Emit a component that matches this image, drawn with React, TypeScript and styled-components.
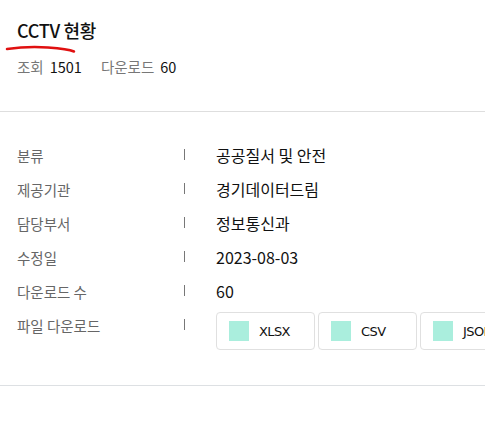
import styled, { createGlobalStyle } from "styled-components";

const GlobalStyle = createGlobalStyle`
  html, body {
    margin: 0;
    padding: 0;
    background: #fff;
  }
  body {
    font-family: "Noto Sans CJK KR", "Noto Sans", sans-serif;
    color: #111;
    overflow: hidden;
  }
`;

const Page = styled.div`
  width: 485px;
  overflow: hidden;
`;

const Header = styled.header`
  position: relative;
  padding: 17px 17px 0;
  height: 94px;
  border-bottom: 1px solid #dedede;
`;

const Title = styled.h1`
  margin: 0;
  font-size: 18px;
  font-weight: 500;
  line-height: 26px;
  letter-spacing: -0.3px;
  color: #111;
`;

const Scribble = styled.svg`
  position: absolute;
  left: 0;
  top: 40px;
  pointer-events: none;
`;

const Stats = styled.div`
  display: flex;
  gap: 19px;
  margin-top: 14px;
  font-size: 14.5px;
  line-height: 20px;
`;

const Stat = styled.span`
  display: flex;
  gap: 6px;
  color: #777;

  b {
    font-weight: 400;
    color: #111;
  }
`;

const InfoList = styled.dl`
  margin: 0;
  padding: 26px 0 35px 17px;
  border-bottom: 1px solid #dde0e3;
`;

const Row = styled.div<{ $tall?: boolean }>`
  display: flex;
  align-items: ${(p) => (p.$tall ? "flex-start" : "center")};
  min-height: 34px;
`;

const Label = styled.dt`
  display: flex;
  align-items: center;
  width: 168px;
  height: 34px;
  flex-shrink: 0;
  font-size: 14.5px;
  color: #666;
  position: relative;

  &::after {
    content: "";
    position: absolute;
    right: 0;
    top: 11px;
    width: 1px;
    height: 11px;
    background: #777;
  }
`;

const Value = styled.dd`
  margin: 0 0 0 31px;
  font-size: 16px;
  line-height: 34px;
  color: #111;
`;

const Files = styled.dd`
  margin: 4px 0 0 31px;
  display: flex;
  gap: 3px;
  flex-wrap: nowrap;
`;

const FileButton = styled.button`
  display: flex;
  align-items: center;
  gap: 10px;
  flex-shrink: 0;
  box-sizing: border-box;
  width: 99px;
  height: 38px;
  padding: 0 12px;
  border: 1px solid #e0e0e0;
  border-radius: 4px;
  background: #fff;
  font-family: "DejaVu Sans", "Noto Sans", sans-serif;
  font-size: 13px;
  color: #111;
  letter-spacing: -0.6px;
  cursor: pointer;
`;

const Swatch = styled.span`
  width: 20px;
  height: 20px;
  background: #aaeedd;
`;

const rows = [
  { label: "분류", value: "공공질서 및 안전" },
  { label: "제공기관", value: "경기데이터드림" },
  { label: "담당부서", value: "정보통신과" },
  { label: "수정일", value: "2023-08-03" },
  { label: "다운로드 수", value: "60" },
];

const formats = ["XLSX", "CSV", "JSON"];

export default function App() {
  return (
    <Page>
      <GlobalStyle />
      <Header>
        <Title>CCTV 현황</Title>
        <Scribble width="90" height="16" viewBox="0 40 90 16">
          <path
            d="M7 49 Q 28 46 48 47.5 T 74 51.5"
            fill="none"
            stroke="#e01010"
            strokeWidth="2.5"
            strokeLinecap="round"
          />
        </Scribble>
        <Stats>
          <Stat>
            조회 <b>1501</b>
          </Stat>
          <Stat>
            다운로드 <b>60</b>
          </Stat>
        </Stats>
      </Header>
      <InfoList>
        {rows.map((r) => (
          <Row key={r.label}>
            <Label>{r.label}</Label>
            <Value>{r.value}</Value>
          </Row>
        ))}
        <Row $tall>
          <Label>파일 다운로드</Label>
          <Files>
            {formats.map((f) => (
              <FileButton key={f}>
                <Swatch />
                {f}
              </FileButton>
            ))}
          </Files>
        </Row>
      </InfoList>
    </Page>
  );
}
